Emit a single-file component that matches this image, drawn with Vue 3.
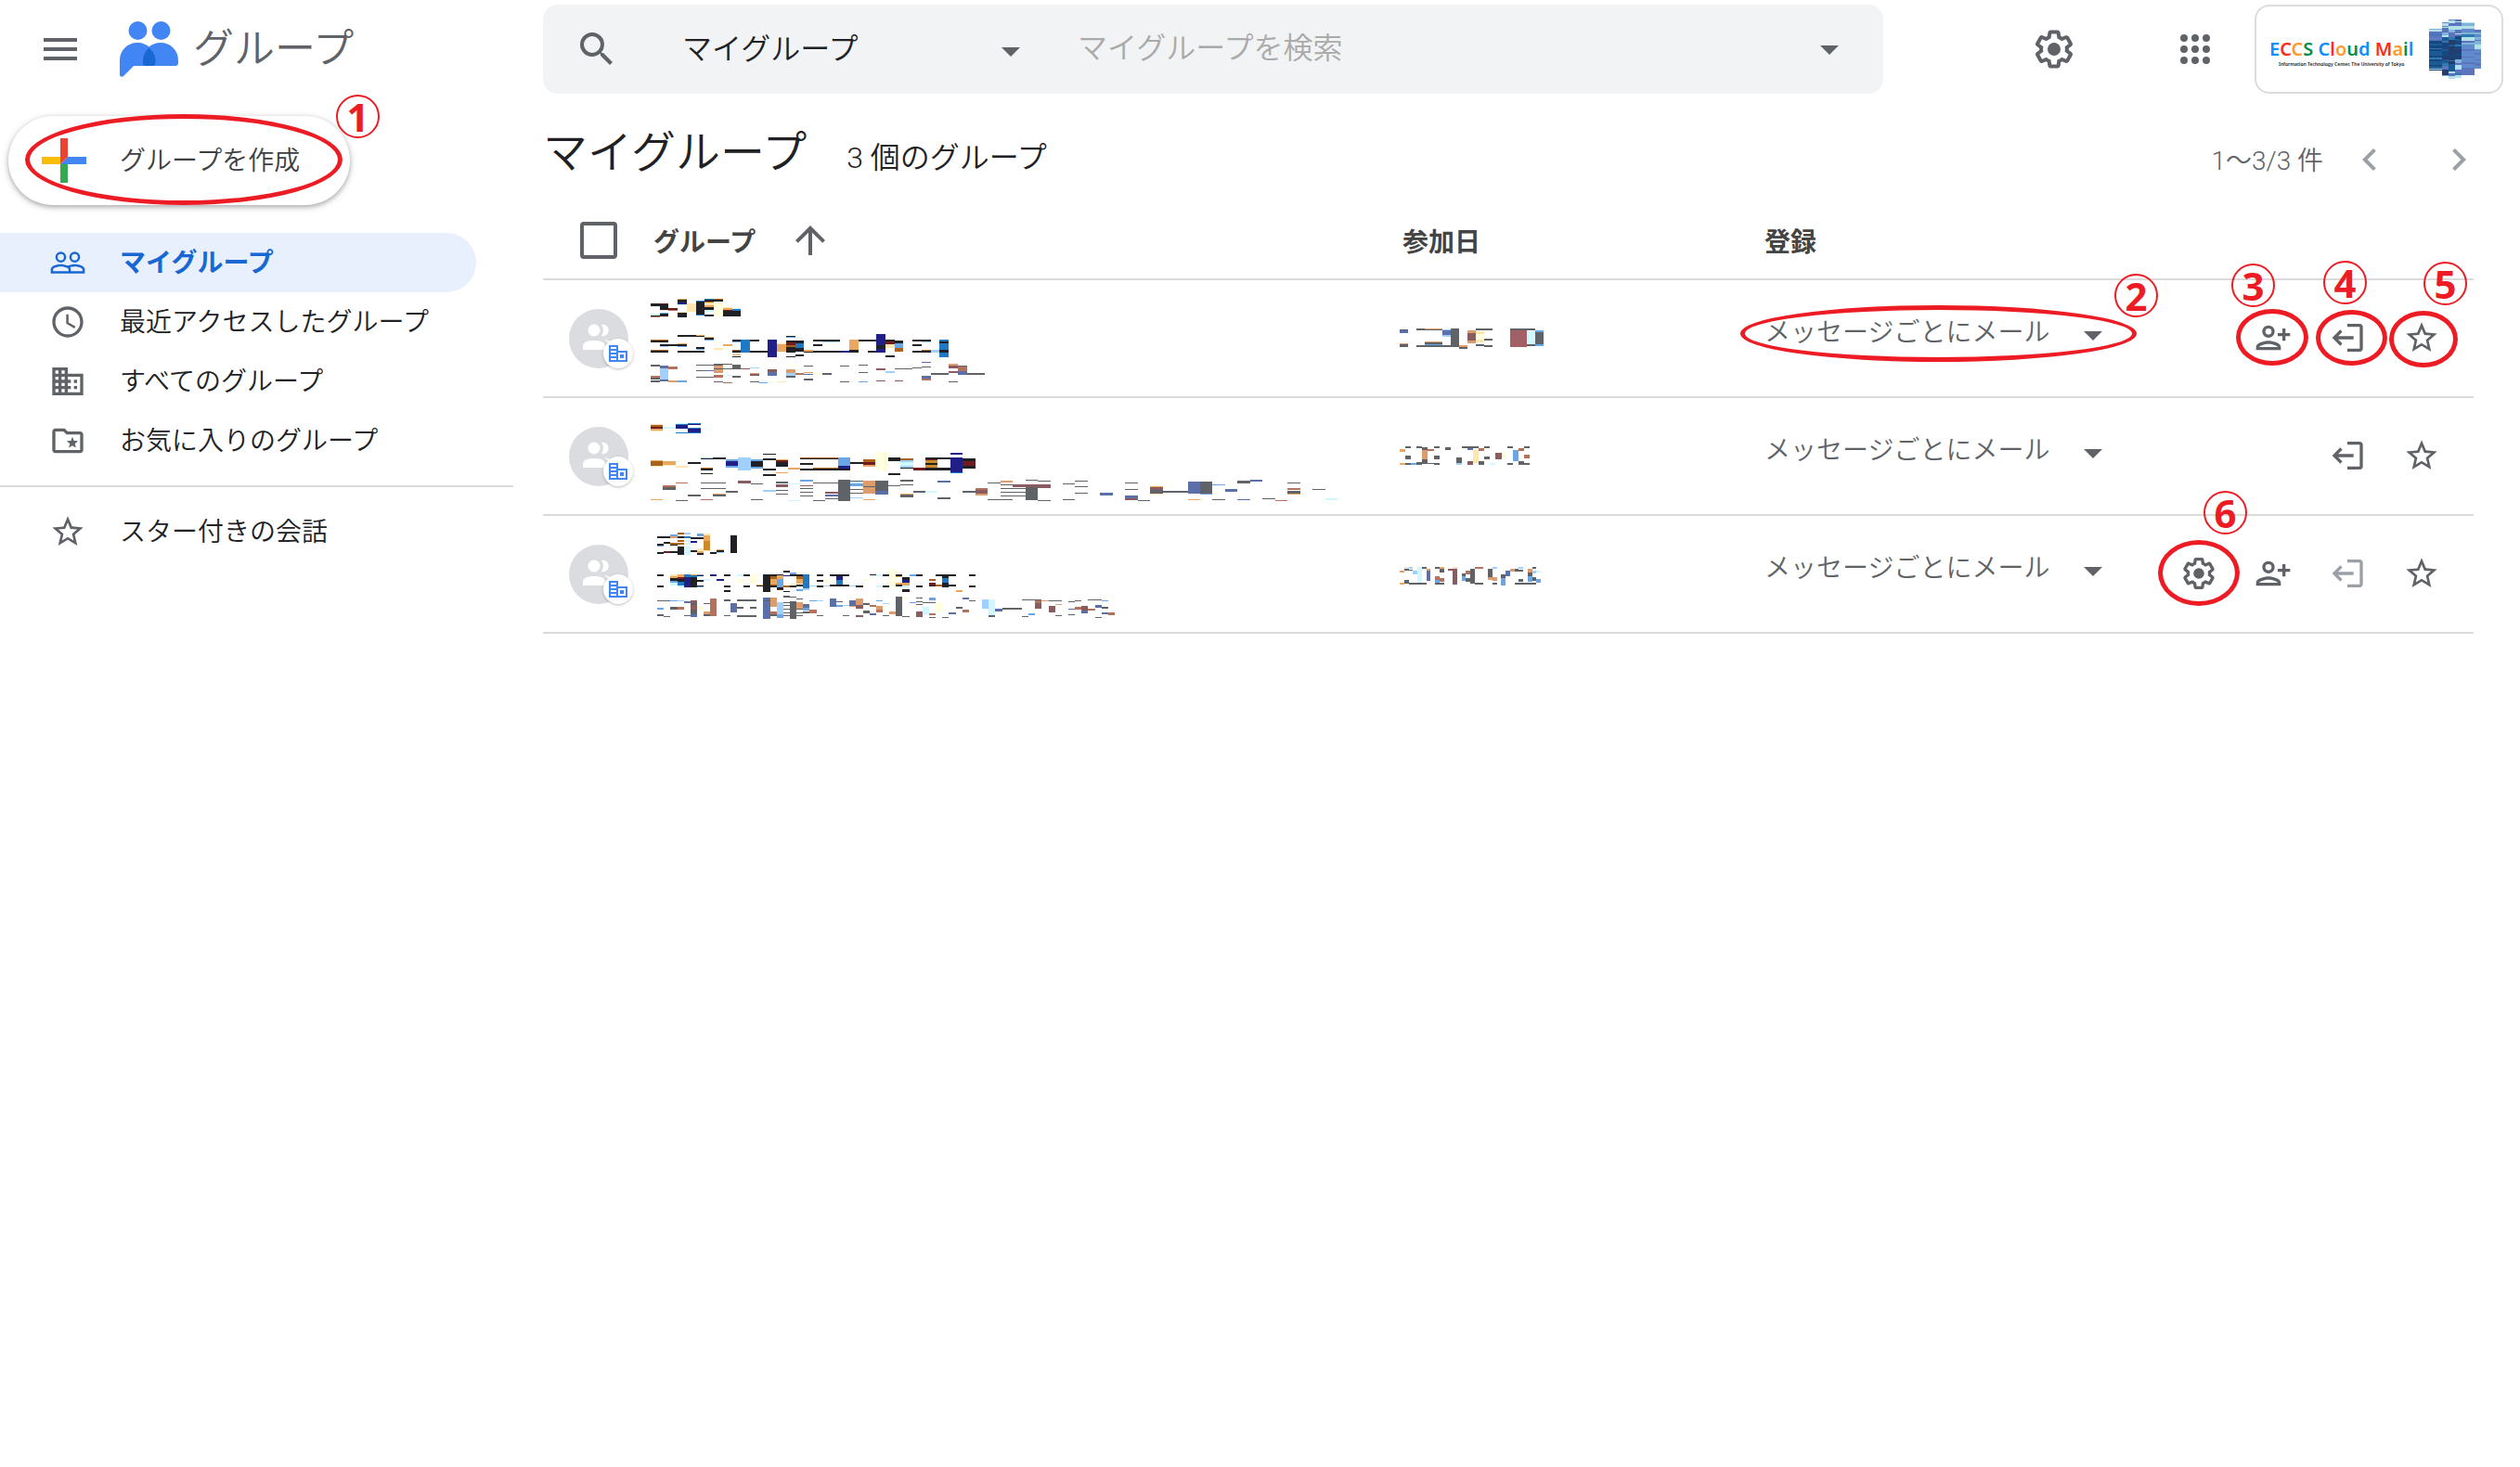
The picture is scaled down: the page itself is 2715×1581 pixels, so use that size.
<script setup>
import { ref, h } from 'vue'

const icons = {
  menu: 'M3 18h18v-2H3zm0-5h18v-2H3zm0-7v2h18V6z',
  search: 'M15.5 14h-.79l-.28-.27A6.47 6.47 0 0 0 16 9.5 6.5 6.5 0 1 0 9.5 16c1.61 0 3.09-.59 4.23-1.57l.27.28v.79l5 4.99L20.49 19zm-6 0a4.5 4.5 0 1 1 0-9 4.5 4.5 0 0 1 0 9z',
  gear: 'M13.85 22.25h-3.7c-.74 0-1.36-.54-1.45-1.27l-.27-1.89c-.27-.14-.53-.29-.79-.46l-1.8.72c-.7.26-1.47-.03-1.81-.65L2.2 15.53c-.35-.66-.2-1.44.36-1.88l1.53-1.19c-.01-.15-.02-.3-.02-.46 0-.15.01-.31.02-.46l-1.52-1.19c-.59-.45-.74-1.26-.37-1.88l1.85-3.19c.34-.62 1.11-.9 1.79-.63l1.81.73c.26-.17.52-.32.78-.46l.27-1.91c.09-.7.71-1.25 1.44-1.25h3.7c.74 0 1.36.54 1.45 1.27l.27 1.89c.27.14.53.29.79.46l1.8-.72c.71-.26 1.48.03 1.82.65l1.84 3.18c.36.66.2 1.44-.36 1.88l-1.52 1.19c.01.15.02.3.02.46s-.01.31-.02.46l1.52 1.19c.56.45.72 1.23.37 1.86l-1.86 3.22c-.34.62-1.11.9-1.8.63l-1.8-.72c-.26.17-.52.32-.78.46l-.27 1.91c-.1.68-.72 1.22-1.46 1.22zm-3.23-2h2.76l.37-2.55.53-.22c.44-.18.88-.44 1.34-.78l.45-.34 2.38.96 1.38-2.4-2.03-1.58.07-.56c.03-.26.06-.51.06-.78s-.03-.53-.06-.78l-.07-.56 2.03-1.58-1.39-2.4-2.39.96-.45-.35c-.42-.32-.87-.58-1.33-.77l-.52-.22-.37-2.55h-2.76l-.37 2.55-.53.21c-.44.19-.88.44-1.34.79l-.45.33-2.38-.95-1.39 2.39 2.03 1.58-.07.56a7 7 0 0 0-.06.79c0 .26.02.53.06.78l.07.56-2.03 1.58 1.38 2.4 2.39-.96.45.35c.43.33.86.58 1.33.77l.53.22.38 2.55zM12 8.5a3.5 3.5 0 1 0 0 7 3.5 3.5 0 0 0 0-7z',
  apps: 'M6 8a2 2 0 1 0 0-4 2 2 0 0 0 0 4zm6 12a2 2 0 1 0 0-4 2 2 0 0 0 0 4zm-6 0a2 2 0 1 0 0-4 2 2 0 0 0 0 4zm0-6a2 2 0 1 0 0-4 2 2 0 0 0 0 4zm6 0a2 2 0 1 0 0-4 2 2 0 0 0 0 4zm6-10a2 2 0 1 0 0 4 2 2 0 0 0 0-4zm-6 4a2 2 0 1 0 0-4 2 2 0 0 0 0 4zm6 6a2 2 0 1 0 0-4 2 2 0 0 0 0 4zm0 6a2 2 0 1 0 0-4 2 2 0 0 0 0 4z',
  people: 'M16.5 13c-1.2 0-3.07.34-4.5 1-1.43-.67-3.3-1-4.5-1C5.33 13 1 14.08 1 16.25V19h22v-2.75c0-2.17-4.33-3.25-6.5-3.25zm-4 4.5h-10v-1.25c0-.54 2.56-1.75 5-1.75s5 1.21 5 1.75v1.25zm9 0H14v-1.25c0-.46-.2-.86-.52-1.22.88-.3 1.96-.53 3.02-.53 2.44 0 5 1.21 5 1.75v1.25zM7.5 12a3.5 3.5 0 1 0 0-7 3.5 3.5 0 0 0 0 7zm0-5.5a2 2 0 1 1 0 4 2 2 0 0 1 0-4zm9 5.5a3.5 3.5 0 1 0 0-7 3.5 3.5 0 0 0 0 7zm0-5.5a2 2 0 1 1 0 4 2 2 0 0 1 0-4z',
  clock: 'M11.99 2C6.47 2 2 6.48 2 12s4.47 10 9.99 10C17.52 22 22 17.52 22 12S17.52 2 11.99 2zM12 20a8 8 0 1 1 0-16 8 8 0 0 1 0 16zm.5-13H11v6l5.25 3.15.75-1.23-4.5-2.67z',
  domain: 'M12 7V3H2v18h20V7H12zM6 19H4v-2h2v2zm0-4H4v-2h2v2zm0-4H4V9h2v2zm0-4H4V5h2v2zm4 12H8v-2h2v2zm0-4H8v-2h2v2zm0-4H8V9h2v2zm0-4H8V5h2v2zm10 12h-8v-2h2v-2h-2v-2h2v-2h-2V9h8v10zm-2-8h-2v2h2v-2zm0 4h-2v2h2v-2z',
  folder: 'M20 6h-8l-2-2H4c-1.1 0-2 .9-2 2v12c0 1.1.9 2 2 2h16c1.1 0 2-.9 2-2V8c0-1.1-.9-2-2-2zm0 12H4V6h5.17l2 2H20v10zM15 9.5l1 2.5 2.7.2-2.1 1.7.7 2.6-2.3-1.4-2.3 1.4.7-2.6-2.1-1.7 2.7-.2z',
  star: 'M22 9.24l-7.19-.62L12 2 9.19 8.63 2 9.24l5.46 4.73L5.82 21 12 17.27 18.18 21l-1.63-7.03L22 9.24zM12 15.4l-3.76 2.27 1-4.28-3.32-2.88 4.38-.38L12 6.1l1.71 4.04 4.38.38-3.32 2.88 1 4.28L12 15.4z',
  arrowUp: 'M4 12l1.41 1.41L11 7.83V20h2V7.83l5.58 5.59L20 12l-8-8z',
  left: 'M15.41 7.41L14 6l-6 6 6 6 1.41-1.41L10.83 12z',
  right: 'M10 6L8.59 7.41 13.17 12l-4.58 4.59L10 18l6-6z',
  personAdd: 'M9 12a4 4 0 1 0 0-8 4 4 0 0 0 0 8zm0-6a2 2 0 1 1 0 4 2 2 0 0 1 0-4zm0 8c-2.67 0-8 1.34-8 4v2h16v-2c0-2.66-5.33-4-8-4zm6 4H3c.2-.7 3.3-2 6-2s5.8 1.3 6 2zM20 9V6h-2v3h-3v2h3v3h2v-3h3V9z',
  leave: 'M12 3h8c1.1 0 2 .9 2 2v14c0 1.1-.9 2-2 2h-8v-2h8V5h-8zM7.4 6.8l1.4 1.4L6 11h10v2H6l2.8 2.8-1.4 1.4L2.2 12z',
}

const Icon = (props) =>
  h('svg', { viewBox: '0 0 24 24', width: props.size, height: props.size, fill: 'currentColor', 'aria-hidden': 'true' }, [
    h('path', { d: icons[props.name], 'fill-rule': 'evenodd' }),
  ])
Icon.props = ['name', 'size']

const palette = {
  k: '#202124', g: '#5f6368', b: '#1f1f87', B: '#1e78c4', s: '#6aa6e6', l: '#a0d0ff', c: '#d0f6ff',
  o: '#e8a860', y: '#ffe6b0', Y: '#ffffdf', r: '#6e1c20', n: '#a8621c', G: '#cc8a28', q: '#dc9c6c',
  t: '#b4725c', m: '#8a5c60', S: '#5b6fa8', p: '#f4dccc', R: '#a25f66',
  1: '#16477f', 2: '#1c5a96', 3: '#263c6c', 4: '#5b74bd', 5: '#5f8acb', 6: '#7fb4d8', 7: '#b4e0ea', 8: '#2f78b0',
}

// Each block is "column y height colour [span]"
const Mosaic = (props) =>
  h(
    'svg',
    {
      viewBox: `${-(props.data.lead || 0)} ${-props.data.top} ${props.data.cols} ${props.height}`,
      width: props.data.width,
      height: props.height,
      preserveAspectRatio: 'none',
      'shape-rendering': 'crispEdges',
      'aria-hidden': 'true',
    },
    props.data.blocks.split(';').map((b) => {
      const [x, y, hh, c, span] = b.trim().split(' ')
      return h('rect', { x, y, width: span || 1, height: hh, fill: palette[c] })
    }),
  )
Mosaic.props = ['data', 'height']

const account = {
  cols: 8, top: 0, width: 56,
  blocks:
    '0 10 1 6 2;0 11 2 7 2;0 13 10 4 2;0 16 1 8 2;0 20 1 5 2;0 23 32 1 2;0 26 2 2 2;0 31 1 8 2;0 34 5 2 2;0 41 2 8 2;0 45 4 2 2;0 51 1 8 2;0 53 1 7 2;' +
    '2 3 1 5;2 4 5 7;2 7 1 5;2 9 5 4;2 14 3 6;2 17 2 7;2 19 6 2;2 23 2 8;2 25 15 1;2 32 2 2;2 40 3 3;2 43 4 2;2 47 6 8;2 50 4 4;2 54 7 3;2 60 1 6;' +
    '3 0 1 5;3 1 3 7;3 4 3 4;3 7 4 7;3 11 3 6;3 14 5 4;3 19 3 8;3 22 30 3;3 27 2 2;3 34 1 1;3 38 3 1;3 44 1 8;3 48 8 2;3 56 2 7;3 58 3 4;3 61 3 7;' +
    '4 0 2 4;4 2 1 7;4 3 4 4;4 7 4 7;4 11 7 4;4 15 1 7;4 18 25 1;4 21 2 2;4 27 2 8;4 33 3 3;4 39 2 3;4 43 4 6;4 47 2 4;4 49 5 7;4 54 4 4;4 58 2 8;4 60 3 7;' +
    '5 3 1 7 2;5 4 3 6 2;5 7 3 7 2;5 10 4 5 2;5 14 2 6 2;5 16 3 8 2;5 19 4 7 2;5 23 2 4 2;5 25 2 6 2;5 27 33 5 2;5 32 2 4 2;5 40 1 4 2;5 46 2 4 2;5 52 8 4 2;' +
    '7 11 4 4;7 14 2 6;7 16 3 5;7 19 5 6;7 22 1 4;7 24 3 6;7 27 5 7;7 32 21 5;7 36 2 4;7 43 1 4;7 47 3 4',
}

const rows = [
  {
    name: {
      cols: 37, top: 20, width: 360,
      blocks:
        '0 5 3 k;0 8 1 c;0 16 2 c;0 18 1 k;0 19 1 t;1 5 1 r;1 6 6 k;1 12 1 p;1 15 1 s;1 16 3 k;1 19 1 p;2 10 2 r;2 12 1 t;3 0 1 o;3 1 3 k;3 4 2 b;3 6 1 c;3 14 1 y;3 15 5 k;4 5 9 y;5 2 1 B;5 3 14 k;5 17 1 B;6 0 1 B;6 1 2 k;6 3 1 n;6 4 3 y;6 7 2 o;6 9 3 k;6 12 2 c;6 17 2 k;7 0 1 n;7 1 2 k;7 4 15 Y;8 9 1 y;8 10 2 o;8 12 1 r;8 13 6 k;9 10 1 c;9 11 2 B;9 13 6 k;' +
        '0 44 1 n 2;0 45 2 k 2;0 55 1 n 2;0 56 2 k 2;1 49 2 k 2;1 51 1 l;3 39 2 k 3;3 48 1 o;3 49 2 k;3 51 1 s;3 56 2 k 3;5 39 1 o;5 52 2 k;5 54 1 s;6 41 1 o;6 42 2 k;6 44 1 s;7 47 1 Y;7 53 2 y;8 49 2 o;9 44 2 k;9 46 1 s;9 55 1 n;9 56 2 k;9 60 1 o;9 62 1 k;10 44 14 B;11 44 2 k;11 56 2 k 2;13 44 19 b;14 48 1 y;14 49 8 o;15 40 1 k;15 41 1 s;15 45 2 k;15 47 3 r;15 50 2 n;15 52 6 k;15 62 1 k;16 45 3 k;16 48 5 B;16 53 4 k;16 60 2 k;17 55 2 o;17 57 1 k;18 44 2 k;18 49 2 k;18 56 2 k;19 44 2 k 2;19 46 1 l 2;19 56 2 k 2;21 56 2 b;22 44 11 o;22 55 3 k;23 44 2 k 2;24 56 2 k;25 38 12 b;25 50 4 k;25 54 4 b;26 44 2 k;26 46 3 r;26 49 4 y;26 61 2 k;27 45 3 k;27 48 5 s;27 53 4 n;29 44 2 k;29 49 2 k;29 56 2 k;30 44 2 k;30 46 1 l;30 55 1 n;30 56 2 k;31 55 3 l;32 44 19 B;32 46 2 k;32 55 3 k;' +
        '0 71 2 g;0 83 2 t;0 85 2 g;0 88 2 g;1 72 3 S;1 75 12 l;1 87 2 S;2 73 3 t;2 88 2 q;3 88 2 s;5 71 1 g 3;5 77 1 g;6 77 1 S;5 84 1 g 2;7 70 1 g 2;7 72 8 q;7 75 1 g 2;7 82 3 t;8 82 1 c;9 71 4 g;9 75 1 g;9 83 2 g;7 89 1 g;8 90 1 t;10 75 1 m;11 74 1 l;11 80 1 q;11 81 2 m;11 89 1 g;12 90 1 s;13 76 3 m;13 79 4 S;14 89 1 y;15 76 4 q;15 80 3 l;15 83 2 g;15 71 1 Y;16 80 2 t;17 72 1 g;17 79 1 q;17 81 1 S;17 86 2 g;18 80 2 Y;19 80 2 g;21 72 1 g;21 89 1 g;23 71 1 g;23 79 1 g;23 89 1 s;25 75 2 m;25 88 1 m;26 78 2 l;27 75 1 g 2;27 88 1 m;29 74 1 g;30 68 1 S;30 73 1 g;30 83 3 S;30 86 2 t;31 80 2 g 2;33 70 2 q;33 72 3 m;33 78 2 m;33 89 1 g;34 72 1 g;34 73 5 t;34 78 4 S;35 80 2 g 2',
    },
    date: {
      cols: 17, top: 52, width: 155,
      blocks:
        '0 1 1 g;0 2 3 S;0 16 1 q;0 17 3 g;2 0 2 g;2 18 2 g 5;3 0 1 q 2;3 1 1 g 2;3 14 1 q 2;3 15 2 g 2;3 17 1 s 2;5 1 1 l;5 2 5 S;5 7 2 l;6 0 20 g;7 18 2 q;7 20 2 g;8 2 3 q;8 5 8 m;8 13 3 q;9 0 2 g;9 3 12 y;9 6 6 Y;9 17 2 g;10 0 2 g;10 11 2 g;10 18 2 g;13 0 2 g 3;13 2 18 R 2;15 3 14 c;15 17 2 g;16 2 2 s;16 4 13 g;16 17 2 s',
    },
    actions: ['personAdd', 'leave', 'star'],
  },
  {
    name: {
      cols: 55, top: 27, width: 740,
      blocks:
        '0 1 1 y;0 2 2 n;0 4 2 r;0 6 2 o;0 8 1 y;1 4 2 c;2 0 1 c;2 1 1 B;2 2 4 b;2 10 1 B;3 0 1 B;3 1 1 b;3 5 1 B;3 6 4 b;3 10 1 B;' +
        '0 40 1 o;0 41 5 n;0 46 1 y;1 41 4 o;1 45 1 y;2 40 1 Y;2 46 2 y;3 42 2 k;4 37 1 l;4 38 1 k;5 37 2 k;4 48 1 n;4 49 2 k;4 54 1 k;6 39 2 s;6 41 5 b;6 46 2 s;7 37 14 l;8 39 2 s;8 41 6 k;8 47 2 s;9 33 1 k;9 38 2 k;9 49 2 k;9 55 2 k;10 39 1 o;10 40 2 r;10 42 5 k;10 53 1 o;11 48 2 o;12 37 1 n 3;12 38 1 k 3;12 43 2 k;12 49 2 k 3;13 48 1 n 2;15 37 9 s;15 46 3 b;15 49 2 k;16 42 2 k;17 39 3 n;17 42 3 r;17 45 2 o;18 31 20 Y;19 37 4 k;19 54 2 k;20 38 2 n;20 40 2 l;20 42 4 c;20 46 2 l;20 48 1 k;21 48 3 r;22 37 2 k 2;22 39 1 r;22 40 3 G;22 43 2 k;22 45 3 G;22 48 3 k 2;24 32 2 b;24 37 16 b;24 53 1 B;25 38 3 k;25 41 5 r;25 46 3 k;' +
        '0 82 1 o;1 67 2 t;1 69 3 g;2 64 1 t;2 83 1 g;3 77 2 g;4 64 1 g 2;4 70 1 g 2;4 82 1 t;5 76 1 q;5 77 2 g;6 73 2 g;7 62 3 m;8 65 1 g;8 82 1 g;9 72 2 l;10 63 2 g;10 66 3 m;10 72 1 g;10 76 1 g;11 65 1 c;11 83 1 c;12 61 2 s;12 67 1 m;12 70 1 g;12 74 1 g;12 78 1 g;13 64 1 g 2;13 83 1 g;14 74 2 m;14 77 2 S;14 81 1 g;15 61 23 g;16 62 1 g;16 63 2 c;16 65 3 s;16 71 1 g;16 75 1 g;16 80 1 l;17 62 14 q;17 68 1 g;17 82 1 o;18 62 11 g;18 73 4 S;19 67 1 g;20 61 2 g;20 66 1 g;20 76 1 o;20 77 3 g;21 73 2 g;22 73 2 c;23 62 2 S;23 80 2 g;25 73 2 g;26 70 2 t;26 72 4 m;26 76 2 q;27 64 1 g;27 82 1 g;28 62 2 q;28 66 1 g 2;28 70 1 g 2;28 74 1 g 2;28 78 1 g 2;28 82 1 g;29 66 3 m 2;30 69 14 g;30 61 1 g;31 62 1 g;31 66 4 m;31 83 1 g;33 65 1 g;33 82 1 g;34 62 1 g;34 68 1 g;34 75 1 g;36 75 3 S;38 64 1 g;38 71 1 g;38 78 3 S;38 81 2 m;39 83 1 g;40 68 1 o;40 69 3 m;40 72 4 g;40 76 1 y;41 73 2 g 2;43 63 13 S;43 82 1 o;44 63 13 g;44 76 1 s;45 66 1 s;45 82 1 g;46 71 3 S;47 62 3 g;48 61 2 S;47 82 1 S;49 81 1 g;50 83 1 t;51 64 1 g;51 70 2 t;51 73 3 g;51 76 1 o;53 71 1 g;54 81 2 c',
    },
    date: {
      cols: 23, top: 52, width: 140,
      blocks:
        '0 3 3 o;0 18 2 o;1 0 2 g;1 10 4 g;1 18 2 g;2 18 2 s;3 0 2 g;3 17 3 g;4 1 3 g;4 4 10 q;4 14 5 g;5 3 2 t;5 18 1 g;6 0 2 g;6 10 4 g;6 18 2 g;8 1 3 g;10 12 6 g;10 18 2 l;11 0 2 g 3;12 2 2 S;12 16 4 m;13 4 14 y;14 2 3 t;14 16 4 g;15 0 2 g;15 11 3 g;16 18 2 c;17 7 7 m;18 6 7 Y;19 0 2 g;19 18 2 g;20 4 12 s;21 2 3 t;21 16 4 g;22 0 2 g;22 9 4 t;22 18 2 g',
    },
    actions: ['leave', 'star'],
  },
  {
    name: {
      cols: 70, lead: 1, top: 18, width: 500,
      blocks:
        '0 4 2 k 2;0 12 2 k;0 14 1 s;0 21 2 k;1 10 2 k;1 20 2 r;2 2 2 s;2 4 2 q;2 11 2 n;2 13 1 k;2 18 1 Y;2 20 2 k;3 0 2 n;3 4 2 k;3 8 2 n;3 11 2 n;3 15 9 k;4 0 2 l;4 4 2 B;4 8 2 c;4 11 2 c;4 15 9 c;5 5 2 k 2;5 9 2 b;5 19 2 k;6 1 3 s;6 17 3 y;6 20 2 o;6 22 2 k;7 1 2 y;7 3 6 o;7 9 10 G;7 19 1 y;8 21 2 k;9 18 1 o;9 19 2 k;9 21 1 l;11 2 1 p;11 3 19 k;' +
        '0 45 2 k;0 57 2 k;2 45 2 y;2 47 2 o;2 49 3 k;2 52 2 s;2 54 3 c;3 45 3 o;3 48 2 r;3 50 3 k;3 53 4 B;3 57 2 c;4 45 3 B;4 48 11 b;5 45 1 o;5 46 2 B;5 48 11 k;6 45 1 s;6 46 1 k;6 51 2 k;6 57 1 k;6 58 1 s;7 50 2 c;8 45 2 b;9 50 2 b;10 45 2 k;10 57 2 k;10 62 2 k;12 45 2 c;12 50 4 Y;13 45 2 k;13 57 2 k;14 45 10 Y;15 56 1 o;15 57 1 k;16 45 19 k;17 45 2 k;17 47 3 n;17 50 6 o;17 56 1 n;17 57 2 k;18 45 1 k;18 46 4 o;18 50 9 s;18 59 2 k;18 61 1 r;19 41 2 k;19 46 1 b;19 57 2 n;19 63 1 k;20 43 2 s;20 45 2 k;20 47 2 Y;20 55 1 y;20 57 2 k;21 45 2 k;21 47 3 n;21 50 5 o;21 56 2 k;21 61 2 s;22 45 15 B;22 60 2 l;23 57 1 l;24 45 2 k;24 51 2 k;24 57 2 k;25 50 4 Y;25 57 1 l;26 45 2 k 3;26 56 2 k 3;27 47 4 b;27 51 5 B;29 57 1 l;30 57 2 k;31 50 2 Y;32 45 1 k;33 45 2 c;33 57 2 c;34 45 2 k;34 57 2 k;35 39 20 Y;36 45 2 k;36 47 1 o;36 54 2 o;36 56 2 k;37 48 3 k;37 51 3 b;37 54 3 o;37 57 2 c;37 61 3 k;38 45 2 s;39 45 2 k;39 57 2 k;41 50 2 n;41 54 3 r;41 57 1 k;42 45 2 k;42 56 2 n;43 45 4 k;43 49 5 B;43 54 5 k;44 45 2 k;44 56 2 k;45 62 2 o;47 45 2 k;47 57 2 k;' +
        '0 73 1 g 2;0 81 2 s;0 88 2 g;1 76 1 Y;1 90 1 g;2 73 1 s;2 80 3 g;3 73 1 l;3 80 3 t;4 74 2 S;4 89 1 g;5 73 3 m;5 76 12 g;5 78 5 m;5 88 3 S;6 79 5 Y;7 76 1 g;7 85 3 q;7 88 2 g;8 71 19 t;10 72 2 g;10 89 1 g;11 76 10 S;12 72 2 g 3;12 80 2 g;14 80 2 g;12 89 2 g 3;16 70 23 S;16 73 1 g;17 70 10 q;17 85 3 t;17 88 2 g;18 75 13 l;18 88 4 s;19 68 2 g;19 75 1 g;19 78 1 g;19 82 1 g;19 86 1 g;19 89 1 g;20 69 1 g;20 74 19 g;21 71 1 g;21 75 7 q;21 82 1 g;21 86 1 g;21 89 1 g;22 77 4 S;22 81 3 s;22 85 2 g;23 73 1 s;23 83 4 t;24 73 1 l;24 89 1 g;26 71 9 S;27 74 1 g;27 78 2 s;28 78 1 l;28 89 1 g;29 73 6 S;29 79 1 q;30 71 7 q;30 78 4 m;30 89 2 m;31 76 2 g;31 84 3 g;32 78 2 t;32 87 2 S;33 73 1 s;33 79 4 q;33 83 3 t;34 76 1 l;34 89 1 g;35 85 3 q;36 69 21 g;37 70 2 Y;37 90 1 g;38 75 1 s;39 70 1 g;39 74 1 g;39 77 1 g;39 85 6 m;40 80 8 c;40 75 1 g 2;41 70 3 s;41 87 2 t;41 91 1 g;42 75 11 Y;43 91 1 g;44 86 2 S;45 80 2 g;46 70 2 S;46 83 3 t;47 73 1 g;48 90 1 Y;49 72 10 l;50 72 17 c;50 89 2 g;51 82 3 S;52 81 2 g 3;55 72 1 g 3;55 90 1 g;56 87 2 s;57 73 3 t;57 76 6 m;58 73 1 q;59 73 1 g 2;59 79 7 m;60 77 1 q;60 89 1 g;62 74 1 g;62 82 1 S;62 88 1 g;63 73 1 g;63 80 3 t;64 79 5 m;64 84 3 S;65 72 1 g 2;65 82 2 t;66 78 3 S;66 91 1 g;67 73 1 s;67 80 2 g;67 86 2 S;68 86 3 t',
    },
    date: {
      cols: 32, top: 55, width: 152,
      blocks:
        '0 4 2 q;0 17 2 o;1 0 2 p;1 2 2 g;1 14 4 g;2 0 2 l;2 3 1 g;2 17 2 g 4;3 4 4 l;4 0 17 c;5 0 2 g;6 4 11 S;6 2 2 q;8 0 2 g;8 10 4 t;8 14 3 s;9 0 2 o;9 2 4 g;9 12 4 t;8 17 2 g 2;11 2 2 m;12 2 17 m;12 0 2 p;14 7 3 g;14 10 5 s;15 4 4 t;15 12 4 g;16 2 4 g;16 6 12 g;17 0 2 t 2;17 17 2 g 2;20 2 9 g;20 11 3 q;21 0 2 l;21 11 4 q;21 17 2 g;23 8 4 g;23 12 8 s;24 4 6 S;25 2 3 q;26 2 3 g;26 17 2 g 5;27 0 2 l;27 3 2 g;27 13 3 g;29 2 4 q;29 6 4 g;29 10 6 s;30 0 2 g;30 4 3 l;30 11 4 g;31 4 2 c;31 13 4 s',
    },
    actions: ['gear', 'personAdd', 'leave', 'star'],
    leaveOff: true,
  },
]

const actionLabels = { gear: 'グループの設定', personAdd: 'メンバーを追加', leave: 'グループから退会', star: 'スターを付ける' }

const nav = [
  { icon: 'people', label: 'マイグループ', active: true },
  { icon: 'clock', label: '最近アクセスしたグループ' },
  { icon: 'domain', label: 'すべてのグループ' },
  { icon: 'folder', label: 'お気に入りのグループ' },
]

const brand = [
  ['E', 'blue'], ['C', 'red'], ['C', 'orange'], ['S', 'green'], [' ', 'blue'],
  ['C', 'blue'], ['l', 'red'], ['o', 'orange'], ['u', 'green'], ['d', 'blue'], [' ', 'blue'],
  ['M', 'red'], ['a', 'orange'], ['i', 'green'], ['l', 'blue'],
]

// Annotations pinned over the page: ring around a control, plus its number
const marks = [
  { n: 1, side: 'left', ring: [27, 123, 342, 98], num: [362, 102] },
  { n: 2, side: 'right', ring: [413, 329, 427, 61], num: [390, 295] },
  { n: 3, side: 'right', ring: [228, 333, 78, 61], num: [264, 284] },
  { n: 4, side: 'right', ring: [143, 334, 77, 60], num: [165, 281] },
  { n: 5, side: 'right', ring: [67, 335, 74, 61], num: [57, 282] },
  { n: 6, side: 'right', ring: [302, 582, 88, 71], num: [294, 529] },
]
const px = (v) => `${v}px`
const ringStyle = (m) => ({ [m.side]: px(m.ring[0]), top: px(m.ring[1]), width: px(m.ring[2]), height: px(m.ring[3]) })
const numStyle = (m) => ({ [m.side]: px(m.num[0]), top: px(m.num[1]) })

const query = ref('')
const scope = ref('マイグループ')
</script>

<template>
  <div class="page">
    <header class="topbar">
      <div class="brand">
        <button class="icon-btn" aria-label="メインメニュー"><Icon name="menu" size="48" /></button>
        <a class="home" href="#">
          <svg width="63" height="60" viewBox="0 0 63 60" aria-hidden="true">
            <g fill="#4285f4">
              <circle cx="19.5" cy="10" r="10" />
              <circle cx="44.5" cy="10" r="10" />
              <path d="M0 42c0-11 8.500-19 19-19s19.500 8 19.500 19v6H15L4.500 58.500C2.500 60.500 0 60 0 57z" />
              <path d="M25 42c0-11 8.500-19 19-19s19 8 19 19v3q0 3-3 3H28q-3 0-3-3z" />
            </g>
            <path fill="#1967d2" d="M31.500 28.500C36 32 38.500 37 38.500 43q0 5-3 5H28q-3 0-3-4c0-7 2.500-12 6.500-15.500z" />
          </svg>
          <span>グループ</span>
        </a>
      </div>

      <form class="search" role="search" @submit.prevent>
        <button class="icon-btn" aria-label="検索"><Icon name="search" size="48" /></button>
        <div class="picker scope">
          <select v-model="scope" aria-label="検索範囲">
            <option>マイグループ</option>
          </select>
          <svg class="caret" width="20" height="20" viewBox="0 0 20 20" aria-hidden="true"><path d="M0 8h20L10 18z" /></svg>
        </div>
        <input v-model="query" type="text" aria-label="マイグループを検索" placeholder="マイグループを検索" />
        <button class="icon-btn" aria-label="検索オプション">
          <svg class="caret" width="20" height="20" viewBox="0 0 20 20" aria-hidden="true"><path d="M0 6h20L10 16z" /></svg>
        </button>
      </form>

      <div class="tools">
        <button class="icon-btn" aria-label="設定"><Icon name="gear" size="48" /></button>
        <button class="icon-btn" aria-label="Google アプリ"><Icon name="apps" size="48" /></button>
        <a class="account" href="#">
          <span class="org">
            <span class="org-name"><span v-for="(c, i) in brand" :key="i" :class="c[1]">{{ c[0] }}</span></span>
            <span class="org-sub">Information Technology Center, The University of Tokyo</span>
          </span>
          <Mosaic :data="account" height="64" />
        </a>
      </div>
    </header>

    <div class="body">
      <aside class="side">
        <button class="create">
          <svg width="48" height="48" viewBox="0 0 48 48" aria-hidden="true">
            <path fill="#fbbc04" d="M0 20h20v8H0z" />
            <path fill="#34a853" d="M20 28h8v20h-8z" />
            <path fill="#4285f4" d="M28 20h20v8H20z" />
            <path fill="#ea4335" d="M20 0h8v20l-8 8z" />
          </svg>
          <span>グループを作成</span>
        </button>
        <nav>
          <a v-for="item in nav" :key="item.label" href="#" class="nav-item" :class="{ active: item.active }">
            <Icon :name="item.icon" size="40" />
            <span>{{ item.label }}</span>
          </a>
          <hr />
          <a href="#" class="nav-item">
            <Icon name="star" size="40" />
            <span>スター付きの会話</span>
          </a>
        </nav>
      </aside>

      <main class="content">
        <div class="heading">
          <h1>マイグループ</h1>
          <span class="count">3 個のグループ</span>
          <div class="pager">
            <span>1～3/3 件</span>
            <button class="icon-btn" aria-label="前のページ"><Icon name="left" size="48" /></button>
            <button class="icon-btn" aria-label="次のページ"><Icon name="right" size="48" /></button>
          </div>
        </div>

        <table>
          <colgroup>
            <col class="c-pick" />
            <col />
            <col class="c-date" />
            <col class="c-sub" />
            <col class="c-act" />
          </colgroup>
          <thead>
            <tr>
              <th><input type="checkbox" aria-label="すべて選択" /></th>
              <th>
                <button class="sort">グループ<Icon name="arrowUp" size="48" /></button>
              </th>
              <th class="date-head">参加日</th>
              <th>登録</th>
              <th></th>
            </tr>
          </thead>
          <tbody>
            <tr v-for="(row, i) in rows" :key="i">
              <td>
                <div class="avatar">
                  <svg width="64" height="64" viewBox="0 0 64 64" aria-hidden="true">
                    <circle cx="32" cy="32" r="32" fill="#dadce0" />
                    <circle cx="27" cy="23" r="6.5" fill="#fff" />
                    <path fill="#fff" d="M35 17a6.200 6.200 0 1 1 0 12q4-6 0-12zM15 44v-4c0-4.500 6-6 12-6s12 1.500 12 6v4zM38 33c6 1 10 3 10 7v4h-5v-4c0-3-2-5-5-7z" />
                  </svg>
                  <span class="badge">
                    <svg width="20" height="18" viewBox="0 0 20 18" aria-hidden="true">
                      <path fill="#4285f4" fill-rule="evenodd" d="M0 0h10v6h10v12H0zM2 2v2h6V2zm0 4v2h6V6zm0 4v2h6v-2zm0 4v2h6v-2zm8-6v8h8V8zm2 2h4v4h-4z" />
                    </svg>
                  </span>
                </div>
              </td>
              <td><Mosaic :data="row.name" height="125" /></td>
              <td><Mosaic :data="row.date" height="125" /></td>
              <td>
                <div class="picker sub">
                  <select aria-label="登録">
                    <option>メッセージごとにメール</option>
                  </select>
                  <svg class="caret" width="20" height="20" viewBox="0 0 20 20" aria-hidden="true"><path d="M0 8h20L10 18z" /></svg>
                </div>
              </td>
              <td>
                <div class="actions">
                  <button
                    v-for="a in row.actions"
                    :key="a"
                    class="icon-btn"
                    :class="{ off: a === 'leave' && row.leaveOff }"
                    :aria-label="actionLabels[a]"
                  >
                    <Icon :name="a" size="40" />
                  </button>
                </div>
              </td>
            </tr>
          </tbody>
        </table>
      </main>
    </div>

    <template v-for="m in marks" :key="m.n">
      <span class="ring" :style="ringStyle(m)"></span>
      <span class="num" :style="numStyle(m)">{{ m.n }}</span>
    </template>
  </div>
</template>

<style>
body {
  margin: 0;
  background: #fff;
}
</style>

<style scoped>
.page {
  position: relative;
  min-height: 100vh;
  font-family: Roboto, "Noto Sans CJK JP", sans-serif;
  font-size: 28px;
  font-weight: 350;
  color: #202124;
}
.page * {
  box-sizing: border-box;
}
button,
select,
input {
  font: inherit;
  color: inherit;
  background: none;
  border: 0;
  padding: 0;
  margin: 0;
}
a {
  color: inherit;
  text-decoration: none;
}
svg {
  display: block;
  flex: none;
}
.icon-btn {
  display: flex;
  align-items: center;
  justify-content: center;
  color: #5f6368;
  flex: none;
}

.topbar {
  display: flex;
  align-items: center;
  height: 106px;
}
.brand {
  display: flex;
  align-items: center;
  gap: 40px;
  width: 585px;
  padding-left: 41px;
  flex: none;
}
.home {
  display: flex;
  align-items: center;
  gap: 16px;
  font-size: 44px;
  line-height: 60px;
  color: #5f6368;
}
.search {
  display: flex;
  align-items: center;
  flex: 1;
  min-width: 0;
  height: 96px;
  padding: 0 48px 0 34px;
  border-radius: 16px;
  background: #f1f3f4;
  font-size: 32px;
}
.search input {
  flex: 1;
  min-width: 0;
  height: 48px;
  padding-bottom: 2px;
  outline: 0;
}
.search input::placeholder {
  color: #aaa;
  opacity: 1;
}
.picker {
  display: grid;
  align-items: center;
}
.picker > * {
  grid-area: 1 / 1;
}
.picker select {
  width: 100%;
  height: 48px;
  appearance: none;
  outline: 0;
}
.caret {
  justify-self: end;
  fill: #5f6368;
  pointer-events: none;
}
.scope {
  width: 364px;
  margin: 0 62px 0 68px;
}
.tools {
  display: flex;
  align-items: center;
  width: 686px;
  padding-right: 18px;
  flex: none;
  justify-content: flex-end;
}
.tools .icon-btn {
  margin-right: 104px;
}
.tools .icon-btn + .icon-btn {
  margin-right: 40px;
}
.account {
  display: flex;
  align-items: center;
  justify-content: space-between;
  width: 268px;
  height: 96px;
  padding: 0 22px 0 14px;
  border: 2px solid #dadce0;
  border-radius: 16px;
}
.org {
  display: flex;
  flex-direction: column;
  align-items: center;
  padding-top: 8px;
  font-family: "Noto Sans", sans-serif;
}
.org-name {
  font-size: 20px;
  font-weight: 600;
  line-height: 24px;
  white-space: pre;
}
.org-sub {
  font-size: 5px;
  font-weight: 600;
  line-height: 8px;
  white-space: nowrap;
}
.blue {
  color: #0a90ff;
}
.red {
  color: #ff2b20;
}
.orange {
  color: #ff9a30;
}
.green {
  color: #00904e;
}

.body {
  display: flex;
}
.side {
  width: 553px;
  padding-top: 19px;
  flex: none;
}
.create {
  display: flex;
  align-items: center;
  gap: 36px;
  width: 368px;
  height: 96px;
  margin: 0 0 30px 9px;
  padding-left: 36px;
  border-radius: 48px;
  background: #fff;
  color: #3c4043;
  box-shadow: 0 2px 4px rgba(60, 64, 67, 0.3), 0 2px 6px 2px rgba(60, 64, 67, 0.15);
}
.create span,
.nav-item span {
  padding-bottom: 4px;
}
.nav-item {
  display: flex;
  align-items: center;
  gap: 36px;
  width: 513px;
  height: 64px;
  padding-left: 53px;
  border-radius: 0 32px 32px 0;
}
.nav-item svg {
  color: #5f6368;
}
.nav-item.active,
.nav-item.active svg {
  background: #e8f0fe;
  color: #1967d2;
  font-weight: 700;
}
hr {
  height: 2px;
  margin: 16px 0;
  border: 0;
  background: #dadada;
}

.content {
  flex: 1;
  min-width: 0;
  padding: 0 50px 0 32px;
}
.heading {
  display: flex;
  align-items: baseline;
  height: 112px;
}
h1 {
  margin: 0;
  font-size: 48px;
  font-weight: inherit;
  line-height: 118px;
}
.count {
  margin-left: 43px;
  font-size: 32px;
}
.pager {
  display: flex;
  align-items: center;
  align-self: center;
  margin: 20px -8px 0 auto;
  color: #5f6368;
}
.pager span {
  padding-bottom: 2px;
}
.pager .icon-btn {
  margin-left: 26px;
  color: #9aa0a6;
}
.pager .icon-btn + .icon-btn {
  margin-left: 48px;
}

table {
  width: 100%;
  table-layout: fixed;
  border-spacing: 0;
}
.c-pick {
  width: 116px;
}
.c-date {
  width: 393px;
}
.c-sub {
  width: 400px;
}
.c-act {
  width: 364px;
}
th,
td {
  padding: 0;
  border-bottom: 2px solid #dadada;
  text-align: left;
  vertical-align: middle;
}
th {
  height: 84px;
  color: #444;
  font-weight: 700;
}
td {
  height: 127px;
}
.date-head {
  padding-left: 3px;
}
input[type="checkbox"] {
  display: block;
  appearance: none;
  width: 40px;
  height: 40px;
  margin-left: 40px;
  border: 4px solid #5f6368;
  border-radius: 4px;
}
.sort {
  display: flex;
  align-items: center;
  gap: 35px;
  padding-left: 3px;
  font-weight: 700;
}
.sort svg {
  color: #5f6368;
}
.avatar {
  position: relative;
  width: 64px;
  margin-left: 28px;
}
.badge {
  position: absolute;
  left: 37px;
  top: 32px;
  display: flex;
  align-items: center;
  justify-content: center;
  width: 32px;
  height: 32px;
  border-radius: 50%;
  background: #fff;
  box-shadow: 0 1px 3px rgba(60, 64, 67, 0.35);
}
.sub {
  width: 364px;
  margin-bottom: 12px;
  color: #5f6368;
}
.actions {
  display: flex;
  justify-content: flex-end;
  gap: 40px;
  padding: 0 36px 2px 0;
}
.actions .off {
  color: #9aa0a6;
}

.ring,
.num {
  position: absolute;
  border-radius: 50%;
  color: #ed1c24;
  pointer-events: none;
}
.ring {
  border: 5px solid;
}
.num {
  width: 47px;
  height: 47px;
  border: 2px solid;
  font: 700 42px/43px "Noto Sans", sans-serif;
  text-align: center;
}
</style>
